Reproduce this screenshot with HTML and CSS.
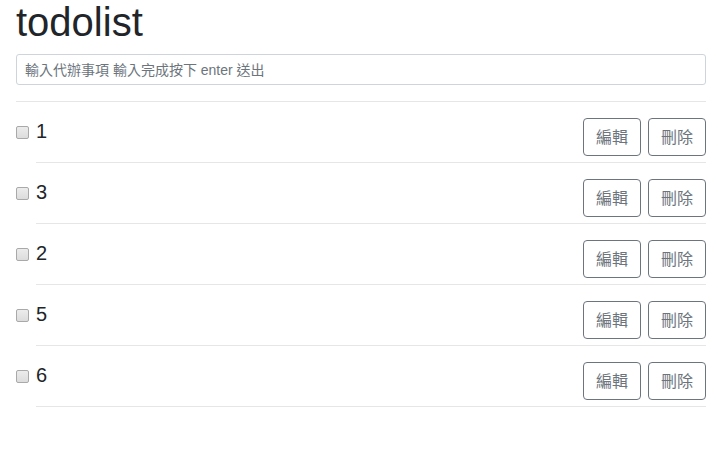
FILE: index.html
```html
<!DOCTYPE html>
<html lang="zh-Hant">
<head>
<meta charset="utf-8">
<title>todolist</title>
<link rel="stylesheet" href="styles.css">
</head>
<body>
<div class="container">
  <h1 class="title">todolist</h1>
  <input class="new-todo" type="text" placeholder="輸入代辦事項 輸入完成按下 enter 送出">
  <hr class="divider">
  <ul class="todo-list">
    <li class="todo-item">
      <input class="todo-check" type="checkbox">
      <div class="todo-body">
        <span class="todo-text">1</span>
        <div class="todo-actions">
          <button class="btn">編輯</button>
          <button class="btn">刪除</button>
        </div>
      </div>
    </li>
    <li class="todo-item">
      <input class="todo-check" type="checkbox">
      <div class="todo-body">
        <span class="todo-text">3</span>
        <div class="todo-actions">
          <button class="btn">編輯</button>
          <button class="btn">刪除</button>
        </div>
      </div>
    </li>
    <li class="todo-item">
      <input class="todo-check" type="checkbox">
      <div class="todo-body">
        <span class="todo-text">2</span>
        <div class="todo-actions">
          <button class="btn">編輯</button>
          <button class="btn">刪除</button>
        </div>
      </div>
    </li>
    <li class="todo-item">
      <input class="todo-check" type="checkbox">
      <div class="todo-body">
        <span class="todo-text">5</span>
        <div class="todo-actions">
          <button class="btn">編輯</button>
          <button class="btn">刪除</button>
        </div>
      </div>
    </li>
    <li class="todo-item">
      <input class="todo-check" type="checkbox">
      <div class="todo-body">
        <span class="todo-text">6</span>
        <div class="todo-actions">
          <button class="btn">編輯</button>
          <button class="btn">刪除</button>
        </div>
      </div>
    </li>
  </ul>
</div>
</body>
</html>
```

FILE: styles.css
```css
* { box-sizing: border-box; }
html, body {
  margin: 0;
  background: #fff;
  font-family: "Liberation Sans", Arial, "Noto Sans CJK TC", sans-serif;
  color: #212529;
  font-size: 16px;
}
.container {
  padding: 0 17px 0 16px;
}
.title {
  margin: -2px 0 8px;
  font-size: 40px;
  font-weight: 400;
  line-height: 48px;
  height: 48px;
}
.new-todo {
  display: block;
  width: 100%;
  height: 31px;
  padding: 4px 8px;
  font-family: "Liberation Sans", Arial, "Noto Sans CJK TC", sans-serif;
  font-size: 14px;
  color: #495057;
  border: 1px solid #ced4da;
  border-radius: 3px;
  outline: none;
}
.new-todo::placeholder { color: #6c757d; }
.divider {
  margin: 16px 0 0;
  border: 0;
  border-top: 1px solid #e6e6e6;
}
.todo-list {
  list-style: none;
  margin: 0;
  padding: 0;
}
.todo-item {
  display: flex;
  align-items: flex-start;
}
.todo-check {
  -webkit-appearance: none;
  appearance: none;
  width: 13px;
  height: 13px;
  margin: 24px 7px 0 0;
  flex: none;
  border: 1px solid #a9a9a9;
  border-radius: 2px;
  background: linear-gradient(#ececec, #dcdcdc);
}
.todo-body {
  flex: 1;
  display: flex;
  justify-content: space-between;
  align-items: flex-start;
  padding: 16px 0 6px;
  border-bottom: 1px solid #e6e6e6;
}
.todo-text {
  font-size: 20px;
  line-height: 24px;
  padding-top: 1px;
}
.todo-actions {
  display: flex;
  gap: 7px;
}
.btn {
  height: 38px;
  width: 58px;
  padding: 5px 12px 7px;
  font-family: "Noto Sans CJK TC", sans-serif;
  font-size: 16px;
  line-height: 24px;
  color: #6c757d;
  background: #fff;
  border: 1px solid #6c757d;
  border-radius: 4px;
}
```
